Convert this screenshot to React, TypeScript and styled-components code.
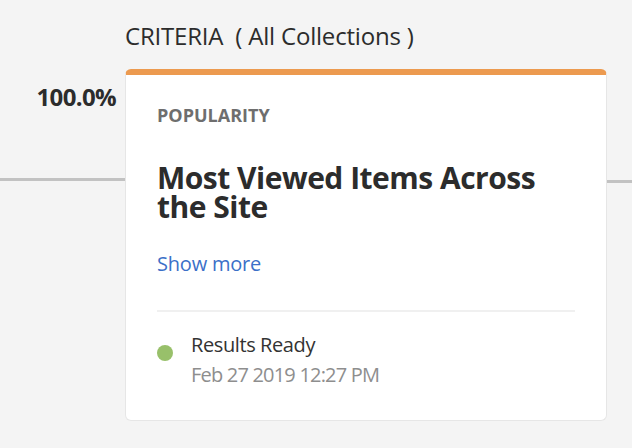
import React from "react";
import styled, { createGlobalStyle } from "styled-components";

const Global = createGlobalStyle`
  html, body { margin: 0; padding: 0; background: #f4f4f4; }
  body { font-family: "Open Sans", "Noto Sans", sans-serif; }
`;

const Page = styled.div`
  width: 632px;
  height: 448px;
  overflow: hidden;
  display: grid;
  grid-template-columns: 125px 482px;
  grid-template-rows: 69px 352px;
  position: relative;
`;

const Header = styled.div`
  grid-column: 2;
  font-size: 24px;
  color: #2c2c2c;
  padding-top: 21px;
  line-height: 30px;
  letter-spacing: -0.2px;
  white-space: pre;
`;

const Percent = styled.div`
  grid-column: 1;
  text-align: right;
  padding-right: 9px;
  padding-top: 13px;
  font-size: 24px;
  line-height: 30px;
  font-weight: 700;
  color: #2c2c2c;
  letter-spacing: -0.65px;
`;

const Connector = styled.div<{ $left: number; $width: number; $top: number }>`
  position: absolute;
  left: ${(p) => p.$left}px;
  width: ${(p) => p.$width}px;
  top: ${(p) => p.$top}px;
  height: 3px;
  background: #c2c2c2;
  z-index: 0;
`;

const Card = styled.div`
  grid-column: 2;
  position: relative;
  z-index: 1;
  background: #fff;
  border: 1px solid #e6e6e6;
  border-top: 6px solid #ec9a4f;
  border-radius: 6px;
  box-sizing: border-box;
  padding: 28px 31px 0 31px;
  display: flex;
  flex-direction: column;
`;

const Category = styled.div`
  font-size: 18px;
  font-weight: 700;
  color: #6e6e6e;
  line-height: 24px;
`;

const Title = styled.div`
  margin-top: 36px;
  font-size: 30px;
  font-weight: 700;
  color: #2c2c2c;
  line-height: 29px;
  letter-spacing: -0.5px;
  width: 400px;
`;

const ShowMore = styled.a`
  margin-top: 30px;
  font-size: 20px;
  color: #3b70c8;
  line-height: 26px;
  letter-spacing: -0.2px;
  text-decoration: none;
  align-self: flex-start;
`;

const Divider = styled.div`
  margin-top: 33px;
  height: 2px;
  background: #f0f0f0;
`;

const Status = styled.div`
  margin-top: 18px;
  display: flex;
  gap: 18px;
  align-items: flex-start;
`;

const Dot = styled.span<{ $color: string }>`
  width: 16px;
  height: 16px;
  border-radius: 50%;
  background: ${(p) => p.$color};
  margin-top: 15px;
  flex: none;
`;

const StatusText = styled.div`
  display: flex;
  flex-direction: column;
  font-size: 20px;
  line-height: 30px;
`;

const StatusLabel = styled.span`
  color: #333;
  letter-spacing: -0.4px;
`;

const StatusDate = styled.span`
  color: #8e8e8e;
  letter-spacing: -0.8px;
`;

export default function App() {
  return (
    <>
      <Global />
      <Page>
        <Connector $left={0} $width={126} $top={178} />
        <Connector $left={604} $width={28} $top={180} />
        <Header>{"CRITERIA  ( All Collections )"}</Header>
        <Percent>100.0%</Percent>
        <Card>
          <Category>POPULARITY</Category>
          <Title>Most Viewed Items Across the Site</Title>
          <ShowMore href="#">Show more</ShowMore>
          <Divider />
          <Status>
            <Dot $color="#98c06a" />
            <StatusText>
              <StatusLabel>Results Ready</StatusLabel>
              <StatusDate>Feb 27 2019 12:27 PM</StatusDate>
            </StatusText>
          </Status>
        </Card>
      </Page>
    </>
  );
}
